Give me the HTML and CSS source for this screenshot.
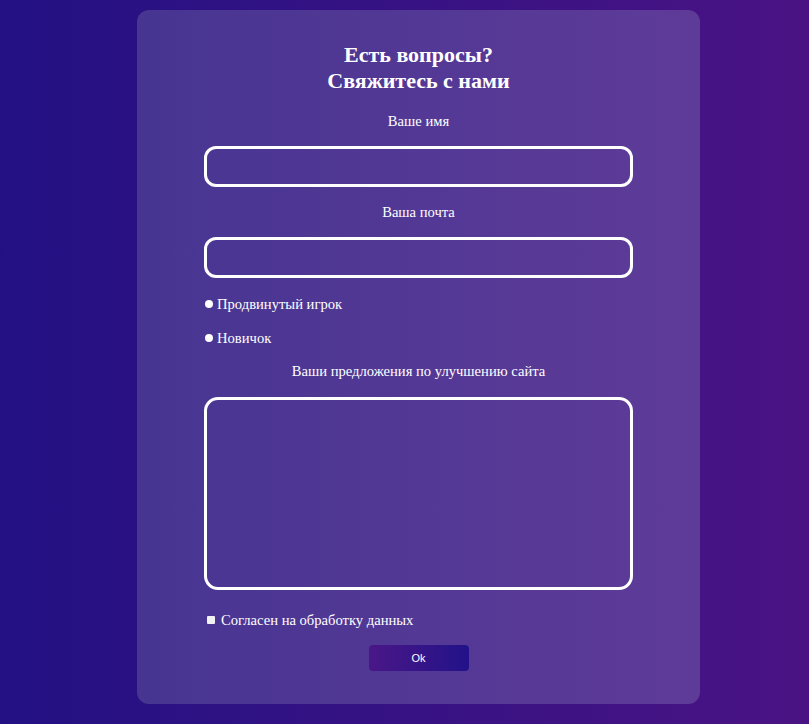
FILE: index.html
```html
<!DOCTYPE html>
<html lang="ru">
<head>
<meta charset="utf-8">
<title>Связаться с нами</title>
<link rel="stylesheet" href="styles.css">
</head>
<body>
<main class="card">
  <h1 class="title">Есть вопросы?<br>Свяжитесь с нами</h1>
  <form class="form">
    <label class="label" for="name">Ваше имя</label>
    <input class="field" id="name" type="text">
    <label class="label" for="mail">Ваша почта</label>
    <input class="field" id="mail" type="email">
    <div class="choices">
      <label class="choice"><input class="radio" type="radio" name="level">Продвинутый игрок</label>
      <label class="choice"><input class="radio" type="radio" name="level">Новичок</label>
    </div>
    <label class="label label-ideas" for="ideas">Ваши предложения по улучшению сайта</label>
    <textarea class="area" id="ideas"></textarea>
    <label class="agree"><input class="check" type="checkbox">Согласен на обработку данных</label>
    <button class="btn" type="button">Ok</button>
  </form>
</main>
</body>
</html>
```
FILE: styles.css
```css
html, body {
  margin: 0;
  padding: 0;
}
body {
  min-height: 724px;
  background: linear-gradient(90deg, #231183 0%, #4a1384 100%);
  font-family: "Liberation Serif", "Times New Roman", serif;
  color: #ffffff;
  overflow: hidden;
}
.card {
  box-sizing: border-box;
  width: 563px;
  height: 694px;
  margin: 10px 0 0 137px;
  border-radius: 12px;
  background: linear-gradient(90deg, #473592 0%, #5f3b98 100%);
  padding-top: 32px;
  display: flex;
  flex-direction: column;
  align-items: center;
}
.title {
  margin: 0;
  font-size: 22px;
  line-height: 26px;
  font-weight: bold;
  text-align: center;
}
.form {
  width: 429px;
  display: flex;
  flex-direction: column;
  align-items: stretch;
}
.label {
  display: block;
  text-align: center;
  font-size: 14.6px;
  line-height: 18px;
  margin-top: 18px;
}
.field {
  box-sizing: border-box;
  height: 41px;
  margin-top: 16px;
  border: 3px solid #ffffff;
  border-radius: 12px;
  background: transparent;
  outline: none;
  color: #fff;
  font: inherit;
}
.field + .label {
  margin-top: 16px;
}
.choices {
  display: flex;
  flex-direction: column;
  gap: 16px;
  margin-top: 17px;
}
.choice {
  display: flex;
  align-items: center;
  font-size: 14.6px;
  line-height: 18px;
  margin-left: 1px;
}
.radio {
  appearance: none;
  -webkit-appearance: none;
  width: 8px;
  height: 8px;
  margin: 0 4px 0 0;
  border-radius: 50%;
  background: #ffffff;
  border: none;
}
.label-ideas {
  margin-top: 15px;
}
.area {
  box-sizing: border-box;
  height: 193px;
  margin-top: 17px;
  border: 3px solid #ffffff;
  border-radius: 14px;
  background: transparent;
  outline: none;
  resize: none;
  color: #fff;
  font: inherit;
}
.agree {
  display: flex;
  align-items: center;
  font-size: 14.6px;
  line-height: 18px;
  margin-top: 21px;
  margin-left: 3px;
}
.check {
  appearance: none;
  -webkit-appearance: none;
  width: 8px;
  height: 8px;
  margin: 0 6px 0 0;
  border-radius: 1px;
  background: #f2f2f2;
  border: none;
}
.btn {
  align-self: center;
  width: 100px;
  height: 26px;
  margin-top: 16px;
  border: none;
  border-radius: 4px;
  background: linear-gradient(90deg, #4a1787 0%, #221289 100%);
  color: #ffffff;
  font-family: "Liberation Sans", Arial, sans-serif;
  font-size: 11px;
}
```
